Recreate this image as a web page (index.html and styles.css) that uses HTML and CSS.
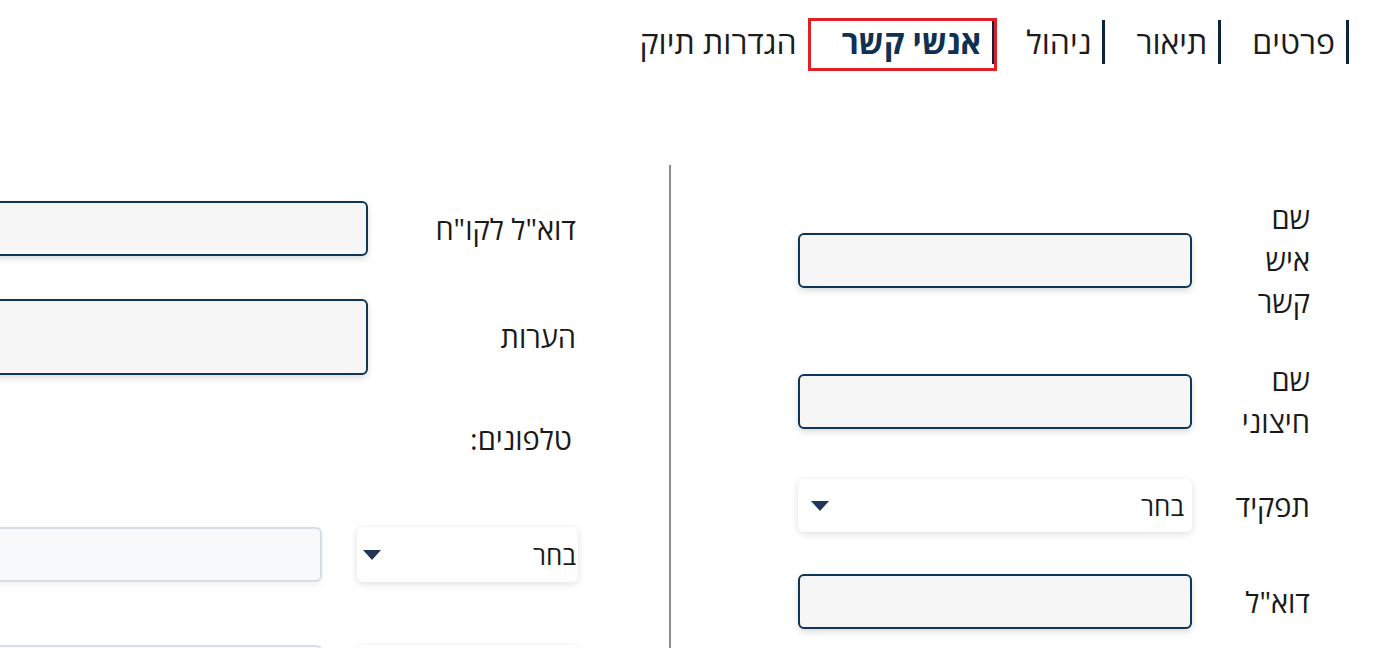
FILE: index.html
```html
<!DOCTYPE html>
<html lang="he" dir="rtl">
<head>
<meta charset="utf-8">
<title>אנשי קשר</title>
<link rel="stylesheet" href="styles.css">
</head>
<body>
<div class="page">
  <nav class="tabs">
    <a class="tab"><span class="tab-label">פרטים</span></a>
    <a class="tab"><span class="tab-label">תיאור</span></a>
    <a class="tab"><span class="tab-label">ניהול</span></a>
    <a class="tab tab-active"><span class="tab-label">אנשי קשר</span></a>
    <a class="tab tab-last"><span class="tab-label">הגדרות תיוק</span></a>
  </nav>

  <div class="form">
    <section class="col col-main">
      <div class="row">
        <label class="label label-narrow">שם איש קשר</label>
        <input class="field" type="text">
      </div>
      <div class="row">
        <label class="label label-narrow">שם חיצוני</label>
        <input class="field" type="text">
      </div>
      <div class="row row-select">
        <label class="label label-narrow">תפקיד</label>
        <div class="select select-wide">
          <span class="select-text">בחר</span>
          <svg class="caret" width="18" height="10" viewBox="0 0 18 10"><path d="M0 0 H18 L9 10 Z" fill="#1f3658"/></svg>
        </div>
      </div>
      <div class="row">
        <label class="label label-narrow">דוא"ל</label>
        <input class="field" type="text">
      </div>
    </section>

    <section class="col col-side">
      <div class="row">
        <label class="label label-wide">דוא"ל לקו"ח</label>
        <input class="field" type="text">
      </div>
      <div class="row">
        <label class="label label-wide">הערות</label>
        <textarea class="field field-area"></textarea>
      </div>
      <div class="phones-title">טלפונים:</div>
      <div class="phone-row">
        <div class="select select-small">
          <span class="select-text">בחר</span>
          <svg class="caret" width="18" height="10" viewBox="0 0 18 10"><path d="M0 0 H18 L9 10 Z" fill="#1f3658"/></svg>
        </div>
        <input class="phone-field" type="text">
      </div>
      <div class="phone-row">
        <div class="select select-small">
          <span class="select-text">בחר</span>
          <svg class="caret" width="18" height="10" viewBox="0 0 18 10"><path d="M0 0 H18 L9 10 Z" fill="#1f3658"/></svg>
        </div>
        <input class="phone-field" type="text">
      </div>
    </section>
  </div>
</div>
</body>
</html>
```

FILE: styles.css
```css
html, body {
  margin: 0;
  padding: 0;
  background: #ffffff;
  overflow: hidden;
}

body {
  font-family: "Open Sans", "Noto Sans", "DejaVu Sans", sans-serif;
  color: #1a1a1a;
  width: 1376px;
  height: 648px;
}

.page {
  width: 1376px;
  overflow: hidden;
  height: 648px;
}

/* ---------- tabs ---------- */
.tabs {
  display: flex;
  flex-direction: row;
  padding: 20px 27px 0 0;
  height: 49px;
}

.tab {
  display: block;
  padding-bottom: 5px;
  color: #1c1c1c;
  text-decoration: none;
  cursor: pointer;
}

.tab-label {
  display: block;
  border-right: 3px solid #0c2340;
  padding: 0 11px 0 31px;
  height: 44px;
  line-height: 44px;
  font-size: 32px;
  white-space: nowrap;
}

.tab-last .tab-label {
  border-right-color: transparent;
  padding-right: 10px;
}

.tab-active {
  outline: 3px solid #e02024;
  outline-offset: -1px;
  color: #0e3154;
}

.tab-active .tab-label {
  font-weight: 700;
  padding-left: 32px;
}

/* ---------- form ---------- */
.form {
  display: flex;
  flex-direction: row;
  margin-top: 96px;
}

.col {
  flex: 0 0 auto;
  display: flex;
  flex-direction: column;
}

.col-main {
  width: 639px;
  padding: 32px 66px 0 0;
  border-left: 2px solid #8a8a8a;
  gap: 36px;
  height: 500px;
}

.col-side {
  padding: 36px 93px 0 0;
}

.row {
  display: flex;
  flex-direction: row;
  align-items: center;
  gap: 32px;
}

.col-side .row {
  margin-bottom: 43px;
}

.label {
  font-size: 29px;
  line-height: 42px;
  color: #1a1a1a;
  text-align: right;
}

.label-narrow {
  width: 86px;
}

.label-wide {
  width: 176px;
}

.field {
  box-sizing: border-box;
  width: 394px;
  height: 55px;
  border: 2px solid #0f3657;
  border-radius: 6px;
  background: #f6f6f6;
  box-shadow: 0 3px 6px rgba(0, 0, 0, 0.14);
  outline: none;
  margin: 0;
  font-family: inherit;
  font-size: 22px;
  padding: 0 10px;
}

.field-area {
  height: 76px;
  resize: none;
}

.select {
  box-sizing: border-box;
  height: 53px;
  background: #ffffff;
  border-radius: 6px;
  box-shadow: 0 2px 7px rgba(0, 0, 0, 0.13);
  display: flex;
  flex-direction: row;
  align-items: center;
  justify-content: space-between;
  padding: 0 8px 0 13px;
}

.select-wide {
  width: 394px;
}

.row-select {
  margin-bottom: 6px;
}

.select-text {
  font-size: 26px;
  color: #1a1a1a;
}

.caret {
  display: block;
}

.phones-title {
  font-size: 29px;
  line-height: 42px;
  padding-right: 4px;
  margin-top: 0;
  margin-bottom: 67px;
}

.phone-row {
  display: flex;
  flex-direction: row;
  align-items: center;
  gap: 35px;
  margin-bottom: 63px;
  margin-right: -2px;
}

.select-small {
  width: 221px;
  height: 55px;
  padding: 0 2px 0 6px;
}

.phone-field {
  box-sizing: border-box;
  width: 394px;
  height: 55px;
  border: 2px solid #d6dde4;
  border-radius: 6px;
  background: #f8f9fa;
  box-shadow: 0 3px 6px rgba(0, 0, 0, 0.06);
  margin: 0;
  outline: none;
}
```
